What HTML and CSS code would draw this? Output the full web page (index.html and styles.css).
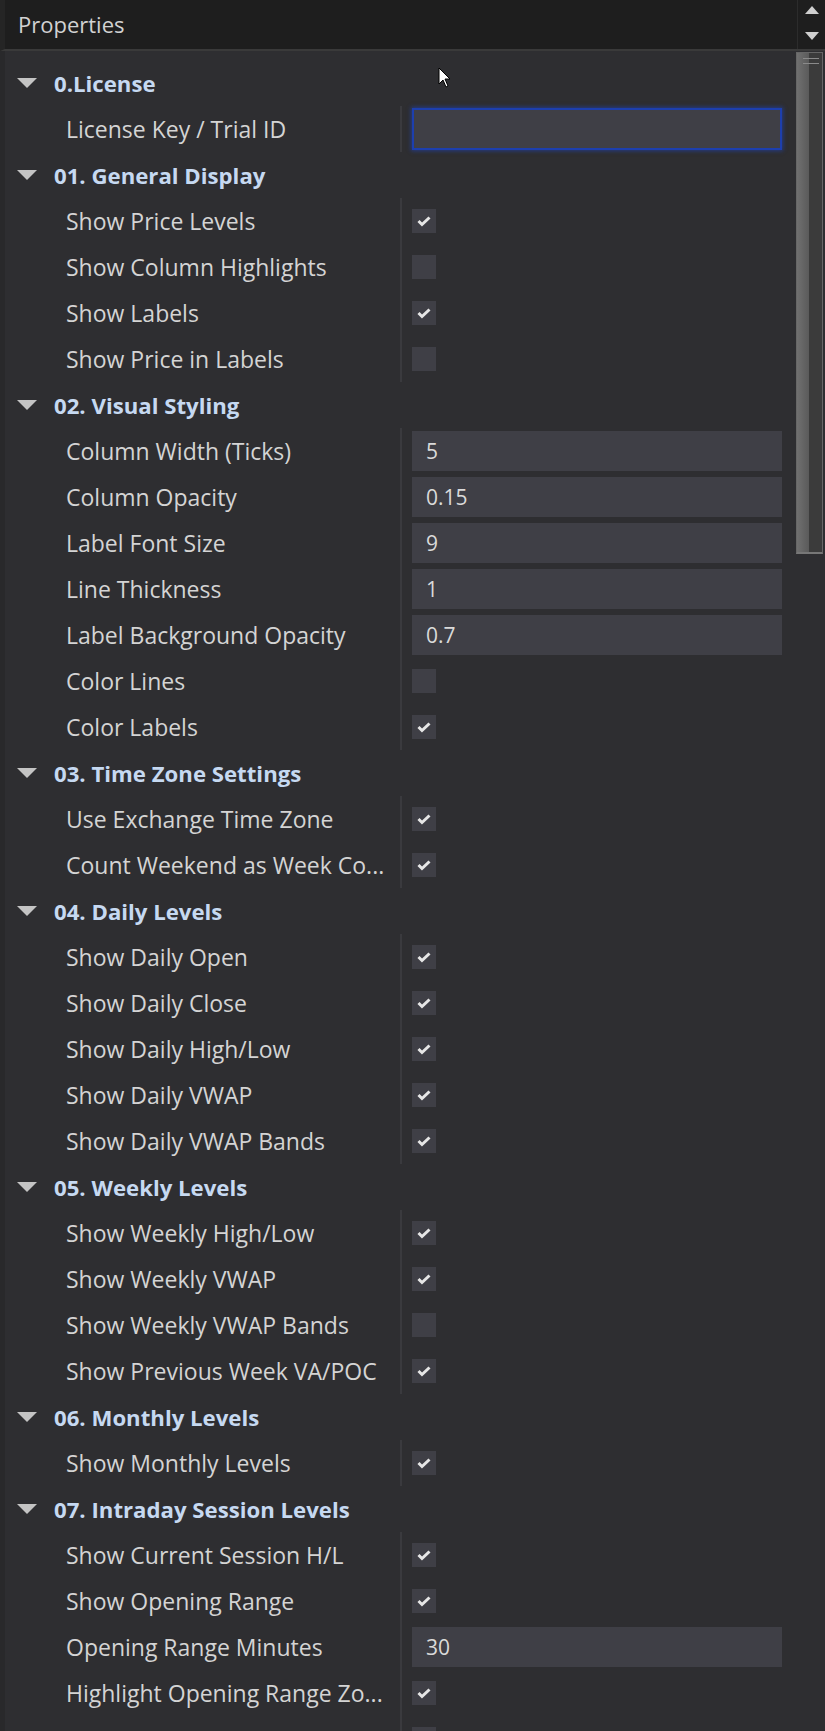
FILE: index.html
```html
<!DOCTYPE html>
<html>
<head>
  <meta charset="UTF-8">
  <title>Properties</title>
  <link rel="stylesheet" href="styles.css">
</head>
<body>

<div class="window">

  <!-- Title bar -->
  <div class="titlebar">
    <div class="title">Properties</div>
    <div class="scroll-arrows">
      <svg width="14" height="8" viewBox="0 0 14 8"><polygon points="7,0 14,8 0,8" fill="#cfcfcf"/></svg>
      <svg width="14" height="8" viewBox="0 0 14 8"><polygon points="0,0 14,0 7,8" fill="#cfcfcf"/></svg>
    </div>
  </div>

  <div class="main">
    <div class="grid" id="grid">

      <div class="category"><svg class="caret" viewBox="0 0 20 10"><polygon points="0,0 20,0 10,10"/></svg><span>0.License</span></div>
      <div class="prop"><div class="name">License Key / Trial ID</div><div class="value"><div class="input focused"></div></div></div>

      <div class="category"><svg class="caret" viewBox="0 0 20 10"><polygon points="0,0 20,0 10,10"/></svg><span>01. General Display</span></div>
      <div class="prop"><div class="name">Show Price Levels</div><div class="value"><div class="check on"></div></div></div>
      <div class="prop"><div class="name">Show Column Highlights</div><div class="value"><div class="check"></div></div></div>
      <div class="prop"><div class="name">Show Labels</div><div class="value"><div class="check on"></div></div></div>
      <div class="prop"><div class="name">Show Price in Labels</div><div class="value"><div class="check"></div></div></div>

      <div class="category"><svg class="caret" viewBox="0 0 20 10"><polygon points="0,0 20,0 10,10"/></svg><span>02. Visual Styling</span></div>
      <div class="prop"><div class="name">Column Width (Ticks)</div><div class="value"><div class="input">5</div></div></div>
      <div class="prop"><div class="name">Column Opacity</div><div class="value"><div class="input">0.15</div></div></div>
      <div class="prop"><div class="name">Label Font Size</div><div class="value"><div class="input">9</div></div></div>
      <div class="prop"><div class="name">Line Thickness</div><div class="value"><div class="input">1</div></div></div>
      <div class="prop"><div class="name">Label Background Opacity</div><div class="value"><div class="input">0.7</div></div></div>
      <div class="prop"><div class="name">Color Lines</div><div class="value"><div class="check"></div></div></div>
      <div class="prop"><div class="name">Color Labels</div><div class="value"><div class="check on"></div></div></div>

      <div class="category"><svg class="caret" viewBox="0 0 20 10"><polygon points="0,0 20,0 10,10"/></svg><span>03. Time Zone Settings</span></div>
      <div class="prop"><div class="name">Use Exchange Time Zone</div><div class="value"><div class="check on"></div></div></div>
      <div class="prop"><div class="name">Count Weekend as Week Co...</div><div class="value"><div class="check on"></div></div></div>

      <div class="category"><svg class="caret" viewBox="0 0 20 10"><polygon points="0,0 20,0 10,10"/></svg><span>04. Daily Levels</span></div>
      <div class="prop"><div class="name">Show Daily Open</div><div class="value"><div class="check on"></div></div></div>
      <div class="prop"><div class="name">Show Daily Close</div><div class="value"><div class="check on"></div></div></div>
      <div class="prop"><div class="name">Show Daily High/Low</div><div class="value"><div class="check on"></div></div></div>
      <div class="prop"><div class="name">Show Daily VWAP</div><div class="value"><div class="check on"></div></div></div>
      <div class="prop"><div class="name">Show Daily VWAP Bands</div><div class="value"><div class="check on"></div></div></div>

      <div class="category"><svg class="caret" viewBox="0 0 20 10"><polygon points="0,0 20,0 10,10"/></svg><span>05. Weekly Levels</span></div>
      <div class="prop"><div class="name">Show Weekly High/Low</div><div class="value"><div class="check on"></div></div></div>
      <div class="prop"><div class="name">Show Weekly VWAP</div><div class="value"><div class="check on"></div></div></div>
      <div class="prop"><div class="name">Show Weekly VWAP Bands</div><div class="value"><div class="check"></div></div></div>
      <div class="prop"><div class="name">Show Previous Week VA/POC</div><div class="value"><div class="check on"></div></div></div>

      <div class="category"><svg class="caret" viewBox="0 0 20 10"><polygon points="0,0 20,0 10,10"/></svg><span>06. Monthly Levels</span></div>
      <div class="prop"><div class="name">Show Monthly Levels</div><div class="value"><div class="check on"></div></div></div>

      <div class="category"><svg class="caret" viewBox="0 0 20 10"><polygon points="0,0 20,0 10,10"/></svg><span>07. Intraday Session Levels</span></div>
      <div class="prop"><div class="name">Show Current Session H/L</div><div class="value"><div class="check on"></div></div></div>
      <div class="prop"><div class="name">Show Opening Range</div><div class="value"><div class="check on"></div></div></div>
      <div class="prop"><div class="name">Opening Range Minutes</div><div class="value"><div class="input">30</div></div></div>
      <div class="prop"><div class="name">Highlight Opening Range Zo...</div><div class="value"><div class="check on"></div></div></div>
      <div class="prop"><div class="name"></div><div class="value"><div class="check on"></div></div></div>

    </div>

    <div class="scrollbar">
      <div class="thumb"><span class="grip"></span><span class="grip"></span></div>
    </div>
  </div>

  <!-- mouse pointer -->
  <svg class="cursor" width="14" height="22" viewBox="0 0 14 22">
    <path d="M1 1 L1 17 L5 13 L8 20 L10 19 L7 12 L12 12 Z" fill="#fff" stroke="#000" stroke-width="1"/>
  </svg>

</div>

<script>
  // draw the tick inside every checked box
  document.querySelectorAll(".check.on").forEach(box => {
    box.innerHTML = '<svg width="14" height="11" viewBox="0 0 14 11"><polyline points="1.5,5 5,8.5 12.5,1.5" fill="none" stroke="#e6e6e6" stroke-width="3"/></svg>';
  });
</script>

</body>
</html>
```

FILE: styles.css
```css
html, body {
  margin: 0;
  padding: 0;
  background: #2e2e31;
}
body {
  font-family: "Open Sans", "Noto Sans", sans-serif;
  font-size: 23px;
  color: #d4d4d4;
}
.window {
  position: relative;
  width: 825px;
  height: 1731px;
  overflow: hidden;
  background: #2e2e31;
}

/* title bar */
.titlebar {
  display: flex;
  height: 49px;
  background: #1e1e1e;
  border-left: 5px solid #252525;
  border-bottom: 2px solid #3a3a3a;
}
.title {
  flex: 1;
  padding-left: 13px;
  line-height: 48px;
  font-size: 22px;
  color: #d2d2d2;
}
.scroll-arrows {
  width: 28px;
  border-left: 1px solid #2c2c2c;
  display: flex;
  flex-direction: column;
  align-items: center;
  gap: 18px;
  padding-top: 6px;
  box-sizing: border-box;
}
.scroll-arrows svg {
  display: block;
}

/* property grid */
.main {
  display: flex;
}
.grid {
  flex: 1;
  padding-top: 9px;
  border-left: 5px solid #29292b;
}
.category {
  display: flex;
  align-items: center;
  height: 46px;
}
.caret {
  width: 20px;
  height: 10px;
  margin-left: 12px;
  fill: #c4c4c4;
}
.category span {
  margin-left: 17px;
  font-size: 22.2px;
  font-weight: bold;
  color: #c6d9f1;
}
.prop {
  display: flex;
  height: 46px;
}
.name {
  width: 395px;
  box-sizing: border-box;
  padding-left: 61px;
  padding-right: 6px;
  line-height: 46px;
  white-space: nowrap;
  overflow: hidden;
  text-overflow: ellipsis;
}
.value {
  flex: 1;
  display: flex;
  align-items: center;
  border-left: 2px solid #3a3a3e;
  padding: 0 14px 0 10px;
}
.input {
  flex: 1;
  height: 40px;
  line-height: 40px;
  padding-left: 14px;
  font-size: 21px;
  background: #3f3f46;
  color: #dadada;
}
.input.focused {
  box-sizing: border-box;
  height: 42px;
  border: 2px solid #1d3fae;
  box-shadow: 0 0 4px 1px rgba(30, 70, 200, 0.55);
}
.check {
  width: 24px;
  height: 24px;
  background: #3f3f46;
  display: flex;
  align-items: center;
  justify-content: center;
}

/* vertical scrollbar */
.scrollbar {
  width: 29px;
  padding-top: 1px;
}
.thumb {
  width: 27px;
  height: 502px;
  border: 1px solid #666;
  border-bottom: 2px solid #777;
  background: linear-gradient(to right, #707070 0%, #5a5a5a 48%, #3b3b3b 48%, #3b3b3b 100%);
  padding-top: 5px;
  box-sizing: border-box;
}
.grip {
  display: block;
  width: 16px;
  height: 1px;
  margin: 0 0 4px 6px;
  background: #8a8a8a;
}

.cursor {
  position: absolute;
  left: 438px;
  top: 67px;
}
```
